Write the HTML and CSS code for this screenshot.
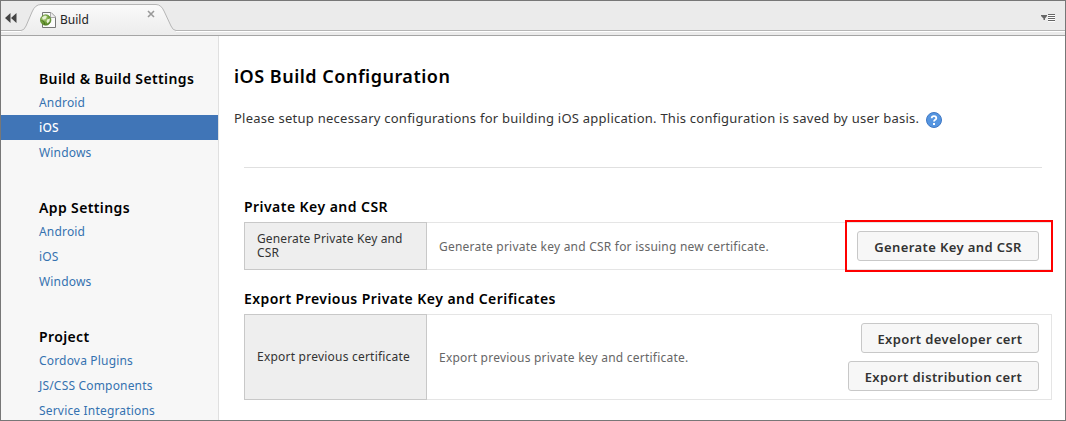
FILE: index.html
```html
<!DOCTYPE html>
<html lang="en">
<head>
<meta charset="utf-8">
<title>Build</title>
<link rel="stylesheet" href="styles.css">
</head>
<body>
<div class="window">
  <header class="tabbar">
    <svg class="tab-shape" width="1064" height="34" viewBox="1 1 1064 34">
      <defs><linearGradient id="tab" x1="0" y1="0" x2="0" y2="1"><stop offset="0" stop-color="#fafafa"/><stop offset="1" stop-color="#ececec"/></linearGradient></defs>
      <path d="M1 31.5H22Q25 31.5 27 27L33 13Q36 4.500 42 4.500H155Q160 4.500 163 11L170 27Q172 31.500 175 31.500H1065" fill="none" stroke="#fff"/>
      <path d="M21 30.500Q24 30.500 26 26L32 12Q35 4.500 41 4.500H156Q161 4.500 164 11L171 26Q173 30.500 176 30.500V35H21Z" fill="url(#tab)"/>
      <path d="M1 30.500H21Q24 30.500 26 26L32 12Q35 4.500 41 4.500H156Q161 4.500 164 11L171 26Q173 30.500 176 30.500H1065" fill="none" stroke="#b5b5b5"/>
    </svg>
    <svg class="back" width="12" height="10" viewBox="0 0 12 10"><path d="M5.500 0V10L0 5ZM11.500 0V10L6 5Z" fill="#444"/></svg>
    <svg class="page" width="16" height="17" viewBox="0 0 16 17">
      <defs><radialGradient id="globe" cx=".35" cy=".3" r=".75"><stop offset="0" stop-color="#c4dda0"/><stop offset=".55" stop-color="#78a63d"/><stop offset="1" stop-color="#4d7a20"/></radialGradient></defs>
      <path d="M2.500 1.500H11L15.500 6V16.500H2.500Z" fill="#fbfbfb" stroke="#777"/><path d="M10.500 1.500V6.500H15.500" fill="#eee" stroke="#aaa"/>
      <circle cx="5.700" cy="9" r="5.200" fill="url(#globe)" stroke="#5b8a2c" stroke-width=".8"/>
      <path d="M2 6.500L5 4.500L7 5.500L5.500 8L3 8.500ZM7 8.500L10 7.500L9.500 10.500L7.500 12.500L6.500 10.500Z" fill="#e5f0d2"/><path d="M1.500 9.500L4 10.500L4.500 13.500" fill="none" stroke="#456f1c"/>
    </svg>
    <span class="tab-title">Build</span>
    <svg class="close" width="8" height="8" viewBox="0 0 8 8"><path d="M1 1L7 7M7 1L1 7" stroke="#999" stroke-width="1.600"/></svg>
    <svg class="menu" width="14" height="9" viewBox="0 0 14 9"><path d="M0 1H6V2L4 4.500V6H2.500V4.500L0 2Z" fill="#666"/><path d="M7 1.500H14M7 3.500H14M7 5.500H14M7 7.500H14" stroke="#fff"/><path d="M7 .5H14M7 2.500H14M7 4.500H14M7 6.500H14" stroke="#666"/></svg>
  </header>
  <div class="body">
    <nav class="sidebar">
      <section class="group"><h2>Build &amp; Build Settings</h2><a>Android</a><a class="active">iOS</a><a>Windows</a></section>
      <section class="group"><h2>App Settings</h2><a>Android</a><a>iOS</a><a>Windows</a></section>
      <section class="group"><h2>Project</h2><a>Cordova Plugins</a><a>JS/CSS Components</a><a>Service Integrations</a></section>
    </nav>
    <main class="main">
      <h1>iOS Build Configuration</h1>
      <p class="intro"><span>Please setup necessary configurations for building iOS application. This configuration is saved by user basis.</span>
        <svg width="16" height="16" viewBox="0 0 16 16"><circle cx="8" cy="8" r="7.500" fill="#5595e0" stroke="#3f78c4"/><path d="M5.700 6.200C5.700 3.500 10.300 3.500 10.300 6.200C10.300 7.800 8 7.800 8 9.500" fill="none" stroke="#fff" stroke-width="1.800"/><path d="M7 11H9V13H7Z" fill="#fff"/></svg>
      </p>
      <div class="rule"></div>
      <h3 class="key-title">Private Key and CSR</h3>
      <div class="row row-key">
        <div class="label">Generate Private Key and<br>CSR</div>
        <div class="desc">Generate private key and CSR for issuing new certificate.</div>
        <div class="actions"><button class="b-key">Generate Key and CSR</button></div>
        <div class="highlight"></div>
      </div>
      <h3 class="export-title">Export Previous Private Key and Cerificates</h3>
      <div class="row row-export">
        <div class="label">Export previous certificate</div>
        <div class="desc">Export previous private key and certificate.</div>
        <div class="actions"><button class="b-dev">Export developer cert</button><button class="b-dist">Export distribution cert</button></div>
      </div>
    </main>
  </div>
</div>
</body>
</html>
```
FILE: styles.css
```css
* { box-sizing: border-box; }
body { margin: 0; font-family: "Noto Sans", sans-serif; font-size: 12px; color: #333; }
.window { width: 1066px; height: 421px; border: 1px solid #777; background: #fff; overflow: hidden; }
.tabbar { position: relative; display: flex; height: 35px; background: #ebebeb; border-bottom: 1px solid #a5a5a5; }
.tab-shape { position: absolute; left: 0; top: 0; }
.tabbar > :not(.tab-shape) { position: relative; }
.tabbar > .tab-shape { position: absolute; }
.back { margin: 12px 0 0 4px; }
.page { margin: 10px 0 0 23px; }
.tab-title { margin: 10px 0 0 4px; width: 87px; line-height: 17px; color: #222; }
.close { margin-top: 9px; }
.menu { margin: 13px 10px 0 auto; }
.body { display: flex; height: 384px; }
.sidebar { width: 218px; flex: none; padding-top: 31px; background: #f7f7f7; border-right: 1px solid #e0e0e0; }
.group { height: 129px; }
.group h2 { margin: 0; padding-left: 38px; height: 23px; line-height: 23px; font-size: 14px; font-weight: 600; letter-spacing: .38px; color: #000; white-space: nowrap; }
.group a { display: block; height: 25px; line-height: 25px; padding-left: 38px; color: #3572b0; letter-spacing: .18px; white-space: nowrap; }
.group a.active { background: #4075b7; color: #fff; font-weight: 500; }
.main { flex: 1; padding: 24px 13px 0 15px; }
.main h1 { margin: 0; height: 32px; line-height: 32px; font-size: 18px; font-weight: 600; letter-spacing: .5px; color: #000; }
.intro { display: flex; align-items: center; gap: 7px; margin: 14px 0 0; height: 24px; font-size: 13px; letter-spacing: .25px; white-space: nowrap; }
.intro svg { margin-top: 4px; }
.rule { height: 1px; margin: 37px 10px 0; background: #e0e0e0; }
.main h3 { margin: 0 0 0 10px; height: 30px; line-height: 30px; font-size: 14px; font-weight: 600; letter-spacing: .45px; color: #000; }
.main .key-title { margin-top: 24px; }
.main .export-title { margin-top: 14px; }
.row { position: relative; display: flex; margin-left: 10px; border: 1px solid #e5e5e5; letter-spacing: .22px; }
.row-key { height: 48px; }
.row-export { height: 86px; }
.label { width: 183px; margin: -1px 0 -1px -1px; border: 1px solid #c8c8c8; background: #eee; padding-left: 12px; display: flex; flex: none; flex-direction: column; justify-content: center; line-height: 14px; white-space: nowrap; }
.row-key .label { display: block; padding-top: 9px; letter-spacing: .13px; }
.desc { flex: 1; align-self: center; padding-left: 12px; color: #666; white-space: nowrap; }
.actions { display: flex; flex-direction: column; align-items: flex-end; gap: 8px; padding: 8px 12px 0 0; }
button { height: 30px; border: 1px solid #c8c8c8; border-radius: 3px; background: #f7f7f7; color: #333; font: 600 13px "Noto Sans", sans-serif; letter-spacing: .4px; padding: 2px 0 0; white-space: nowrap; }
.b-key { width: 182px; }
.b-dev { width: 178px; }
.b-dist { width: 191px; }
.highlight { position: absolute; left: 600px; top: -3px; width: 208px; height: 52px; border: 2px solid #f00; pointer-events: none; }
```
